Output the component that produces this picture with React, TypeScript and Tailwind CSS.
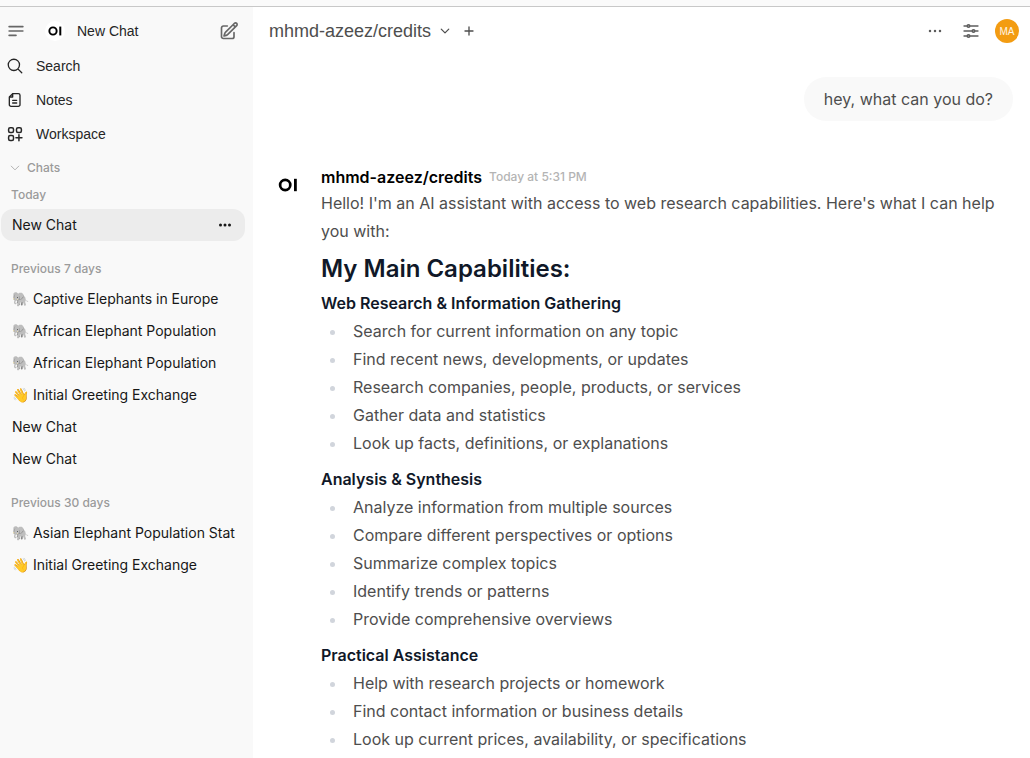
import type { ReactNode } from "react";

interface IconProps {
  className?: string;
  strokeWidth?: number;
  children: ReactNode;
}

function Icon({ className = "size-5", strokeWidth = 2, children }: IconProps) {
  return (
    <svg
      viewBox="0 0 24 24"
      fill="none"
      stroke="currentColor"
      strokeWidth={strokeWidth}
      strokeLinecap="round"
      strokeLinejoin="round"
      className={`shrink-0 ${className}`}
      aria-hidden="true"
    >
      {children}
    </svg>
  );
}

function Logo({ className }: { className: string }) {
  return (
    <svg viewBox="0 0 28 28" className={`shrink-0 ${className}`} aria-hidden="true">
      <circle cx="11.2" cy="14" r="5.1" fill="none" stroke="#000" strokeWidth="2.7" />
      <rect x="20" y="7.8" width="2.8" height="12.4" fill="#000" />
    </svg>
  );
}

const navItems = [
  {
    label: "Search",
    icon: (
      <Icon className="size-[18px]" strokeWidth={1.75}>
        <path d="m21 21-5.197-5.197m0 0A7.5 7.5 0 1 0 5.196 5.196a7.5 7.5 0 0 0 10.607 10.607Z" />
      </Icon>
    ),
  },
  {
    label: "Notes",
    icon: (
      <Icon className="size-4">
        <path d="M8.5 2.5H17a2.5 2.5 0 0 1 2.5 2.5v14a2.5 2.5 0 0 1-2.5 2.5H6A2.5 2.5 0 0 1 3.5 19V7.5Z" />
        <path d="M8.5 3v4.5H4M8.5 12.5h6M8.5 16.5h6" />
      </Icon>
    ),
  },
  {
    label: "Workspace",
    icon: (
      <Icon className="size-[18px]">
        <rect x="3.5" y="3.5" width="6.5" height="6.5" rx="2" />
        <rect x="14" y="3.5" width="6.5" height="6.5" rx="2" />
        <rect x="3.5" y="14" width="6.5" height="6.5" rx="2" />
        <path d="M17.25 13v8M13.25 17h8" />
      </Icon>
    ),
  },
];

const history = [
  {
    label: "Today",
    chats: ["New Chat"],
  },
  {
    label: "Previous 7 days",
    chats: [
      "🐘 Captive Elephants in Europe",
      "🐘 African Elephant Population",
      "🐘 African Elephant Population",
      "👋 Initial Greeting Exchange",
      "New Chat",
      "New Chat",
    ],
  },
  {
    label: "Previous 30 days",
    chats: ["🐘 Asian Elephant Population Statistics", "👋 Initial Greeting Exchange"],
  },
];

const capabilities = [
  {
    title: "Web Research & Information Gathering",
    items: [
      "Search for current information on any topic",
      "Find recent news, developments, or updates",
      "Research companies, people, products, or services",
      "Gather data and statistics",
      "Look up facts, definitions, or explanations",
    ],
  },
  {
    title: "Analysis & Synthesis",
    items: [
      "Analyze information from multiple sources",
      "Compare different perspectives or options",
      "Summarize complex topics",
      "Identify trends or patterns",
      "Provide comprehensive overviews",
    ],
  },
  {
    title: "Practical Assistance",
    items: [
      "Help with research projects or homework",
      "Find contact information or business details",
      "Look up current prices, availability, or specifications",
    ],
  },
];

function Dots({ className }: { className: string }) {
  return (
    <svg viewBox="0 0 12 12" fill="currentColor" className={`shrink-0 ${className}`} aria-hidden="true">
      <circle cx="1.5" cy="6" r="1.5" />
      <circle cx="6" cy="6" r="1.5" />
      <circle cx="10.5" cy="6" r="1.5" />
    </svg>
  );
}

function Sidebar() {
  return (
    <aside className="w-[253px] shrink-0 bg-[#f9f9f9] text-sm text-[#171717]">
      <div className="flex items-center pt-2 pr-3.5 pb-0.5 pl-1.5 font-['Liberation_Sans',sans-serif]">
        <button type="button" aria-label="Toggle sidebar" className="text-[#676767]">
          <Icon>
            <path d="M3.75 6.75h16.5M3.75 12h16.5m-16.5 5.25H12" />
          </Icon>
        </button>
        <a href="#new" className="ml-[19px] flex h-8 flex-1 items-center gap-3 text-[#262626]">
          <span className="rounded-full bg-white">
            <Logo className="size-5" />
          </span>
          New Chat
        </a>
        <button type="button" aria-label="New chat" className="text-[#676767]">
          <Icon>
            <path d="m16.862 4.487 1.687-1.688a1.875 1.875 0 1 1 2.652 2.652L10.582 16.07a4.5 4.5 0 0 1-1.897 1.13L6 18l.8-2.685a4.5 4.5 0 0 1 1.13-1.897l8.932-8.931Zm0 0L19.5 7.125M18 14v4.75A2.25 2.25 0 0 1 15.75 21H5.25A2.25 2.25 0 0 1 3 18.75V8.25A2.25 2.25 0 0 1 5.25 6H10" />
          </Icon>
        </button>
      </div>

      <nav className="font-['Liberation_Sans',sans-serif] text-[#262626]">
        {navItems.map((item) => (
          <a key={item.label} href={`#${item.label.toLowerCase()}`} className="flex h-[34px] items-center gap-3 pl-1.5">
            <span className="flex w-[18px] justify-center">{item.icon}</span>
            {item.label}
          </a>
        ))}
      </nav>

      <button type="button" className="mt-2 flex h-[18px] items-center gap-1.5 pl-[9px] text-xs font-medium text-[#9b9b9b]">
        <Icon className="size-3 text-[#b4b4b4]">
          <path d="m19.5 8.25-7.5 7.5-7.5-7.5" />
        </Icon>
        Chats
      </button>

      <div className="pt-2.5">
        {history.map((group, groupIndex) => (
          <section key={group.label} className={groupIndex > 0 ? "pt-5" : ""}>
            <h2 className="pb-1.5 pl-[11px] text-xs font-medium text-[#9b9b9b]">{group.label}</h2>
            <ul>
              {group.chats.map((chat, i) => {
                const active = groupIndex === 0;
                return (
                  <li
                    key={i}
                    className={`mr-2 ml-px flex h-8 items-center rounded-xl pr-2.5 pl-[11px] ${active ? "bg-[#ececec]" : ""}`}
                  >
                    <a href="#chat" className="min-w-0 flex-1 overflow-hidden whitespace-nowrap">
                      {chat}
                    </a>
                    {active && (
                      <button type="button" aria-label="Chat menu" className="px-1">
                        <Dots className="size-3" />
                      </button>
                    )}
                  </li>
                );
              })}
            </ul>
          </section>
        ))}
      </div>
    </aside>
  );
}

function ChatHeader() {
  return (
    <header className="flex h-12 items-center pr-[11px] pl-4 text-[#4e4e4e]">
      <button type="button" className="flex items-center gap-2 font-['Liberation_Sans',sans-serif] text-lg">
        mhmd-azeez/credits
        <Icon className="size-3" strokeWidth={2.5}>
          <path d="m19.5 8.25-7.5 7.5-7.5-7.5" />
        </Icon>
      </button>
      <button type="button" aria-label="Add model" className="ml-2.5">
        <Icon className="size-4">
          <path d="M12 6v12m6-6H6" />
        </Icon>
      </button>
      <div className="ml-auto flex items-center gap-4 text-[#5d5d5d]">
        <button type="button" aria-label="More">
          <Icon strokeWidth={1.5}>
            <path d="M6.75 12a.75.75 0 1 1-1.5 0 .75.75 0 0 1 1.5 0ZM12.75 12a.75.75 0 1 1-1.5 0 .75.75 0 0 1 1.5 0ZM18.75 12a.75.75 0 1 1-1.5 0 .75.75 0 0 1 1.5 0Z" />
          </Icon>
        </button>
        <button type="button" aria-label="Controls">
          <Icon>
            <path d="M10.5 6h9.75M10.5 6a1.5 1.5 0 1 1-3 0m3 0a1.5 1.5 0 1 0-3 0M3.75 6H7.5m3 12h9.75m-9.75 0a1.5 1.5 0 0 1-3 0m3 0a1.5 1.5 0 0 0-3 0m-3.75 0H7.5m9-6h3.75m-3.75 0a1.5 1.5 0 0 1-3 0m3 0a1.5 1.5 0 0 0-3 0m-9.75 0h9.75" />
          </Icon>
        </button>
      </div>
      <button
        type="button"
        className="ml-3.5 flex size-6 items-center justify-center rounded-full bg-[#f39c12] font-['Liberation_Sans',sans-serif] text-[10px] text-white/90"
      >
        MA
      </button>
    </header>
  );
}

export default function App() {
  return (
    <div className="flex min-h-screen flex-col bg-white font-['Inter',sans-serif]">
      <div className="h-[7px] shrink-0 border-b border-[#c8c8c8] bg-[#fafafa]" />
      <div className="flex flex-1">
        <Sidebar />
        <main className="min-w-0 flex-1">
          <ChatHeader />
          <div className="pt-[22px] pr-[17px] pl-[21px] leading-7 text-[#4e4e4e]">
            <p className="ml-auto w-fit rounded-3xl bg-[#f9f9f9] px-5 py-2">hey, what can you do?</p>

            <article className="mt-11 flex">
              <Logo className="mt-1.5 size-7" />
              <div className="min-w-0 flex-1 pl-[19px]">
                <div className="flex items-center gap-[7px]">
                  <span className="leading-6 font-semibold text-black">mhmd-azeez/credits</span>
                  <time className="text-xs font-medium text-[#b4b4b4]">Today at 5:31 PM</time>
                </div>
                <p>
                  Hello! I'm an AI assistant with access to web research capabilities. Here's what I can help you with:
                </p>
                <h1 className="mt-2 mb-1 text-2xl font-semibold text-gray-900">My Main Capabilities:</h1>
                <div className="flex flex-col gap-2">
                  {capabilities.map((section) => (
                    <section key={section.title}>
                      <h2 className="font-semibold text-gray-900">{section.title}</h2>
                      <ul className="list-disc pl-[26px] marker:text-gray-300">
                        {section.items.map((item) => (
                          <li key={item} className="pl-1.5">
                            {item}
                          </li>
                        ))}
                      </ul>
                    </section>
                  ))}
                </div>
              </div>
            </article>
          </div>
        </main>
      </div>
    </div>
  );
}
